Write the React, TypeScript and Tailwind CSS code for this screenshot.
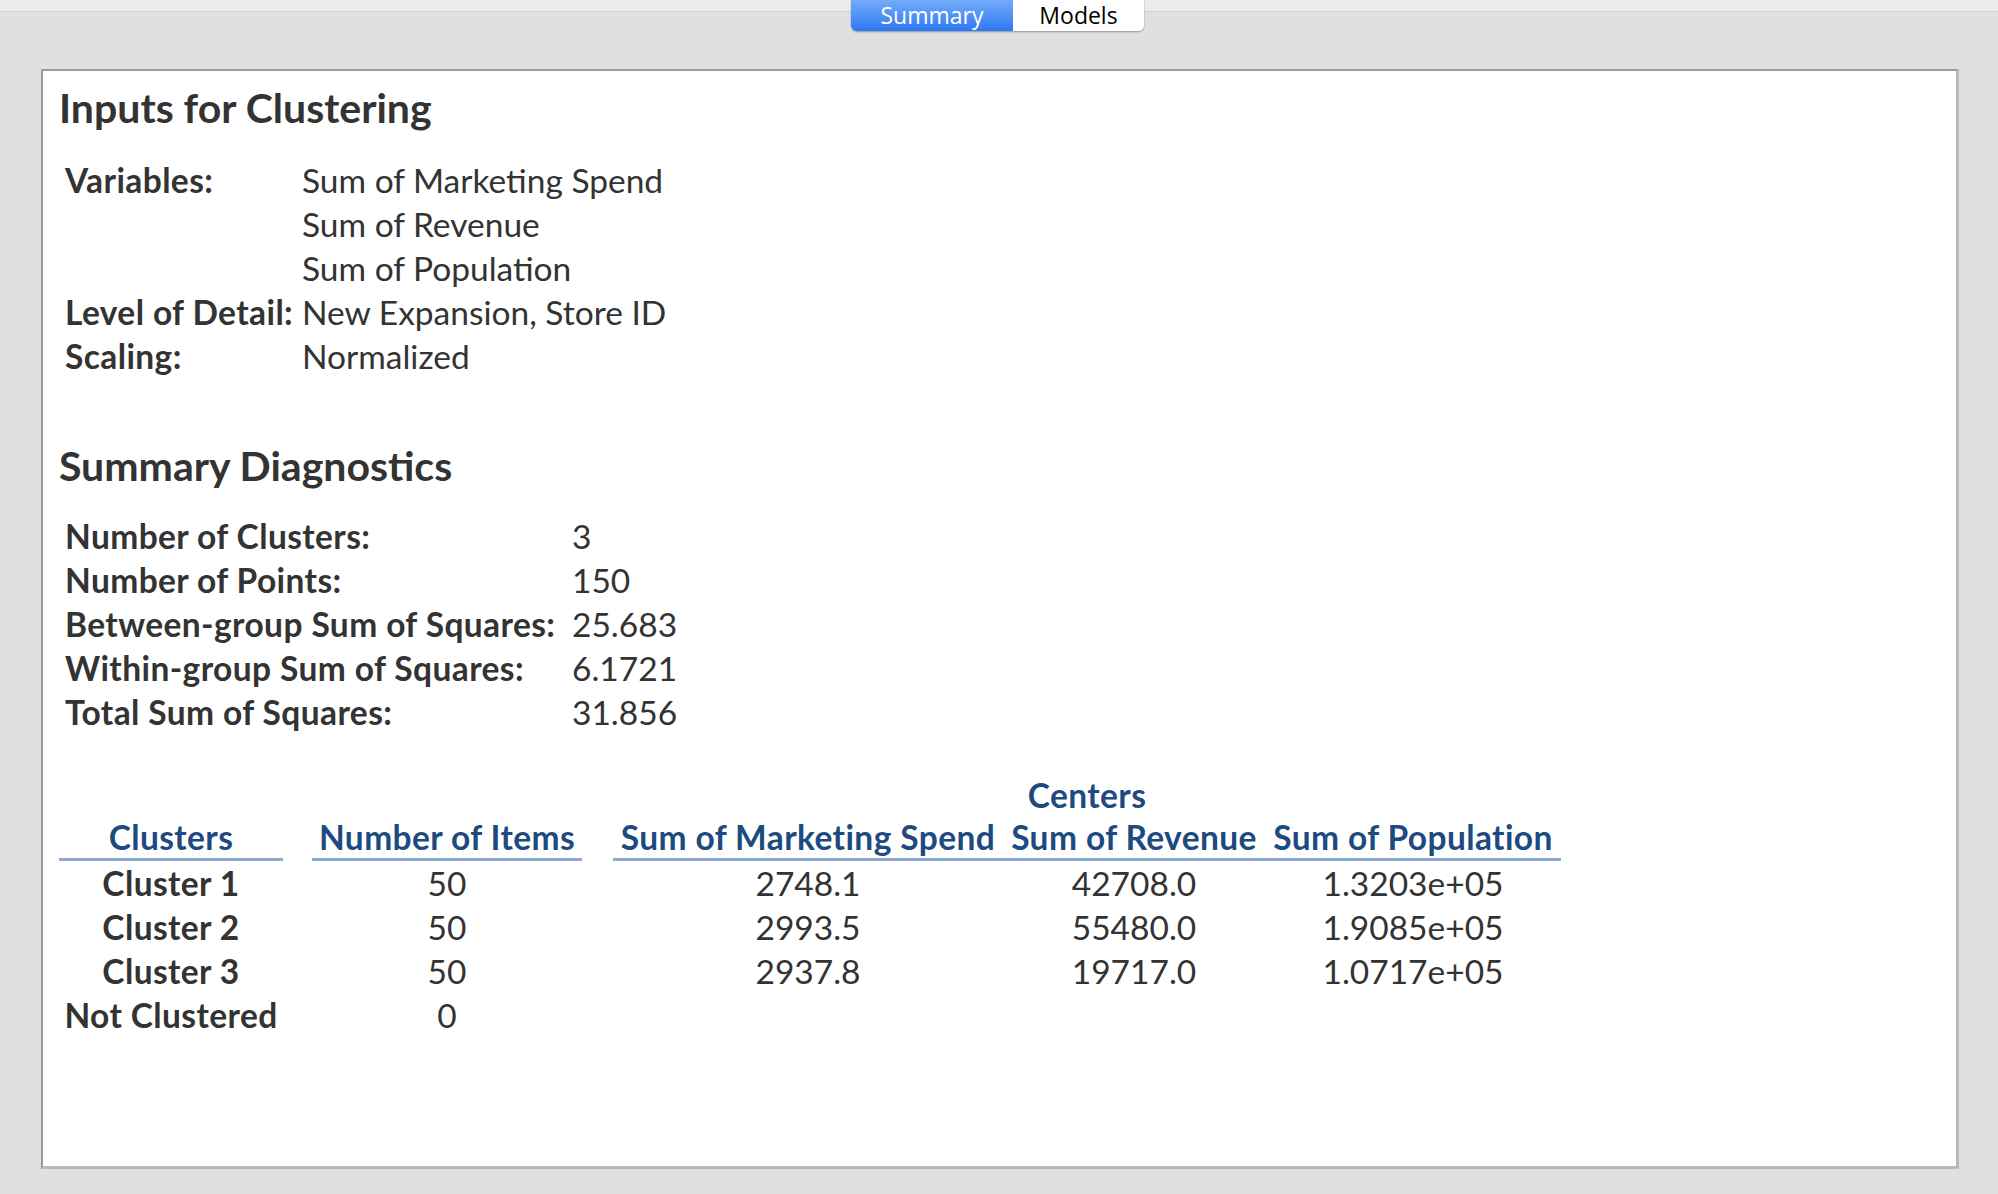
import React from 'react';

const inputs = [
  { label: 'Variables:', value: 'Sum of Marketing Spend' },
  { label: '', value: 'Sum of Revenue' },
  { label: '', value: 'Sum of Population' },
  { label: 'Level of Detail:', value: 'New Expansion, Store ID' },
  { label: 'Scaling:', value: 'Normalized' },
];

const diagnostics = [
  { label: 'Number of Clusters:', value: '3' },
  { label: 'Number of Points:', value: '150' },
  { label: 'Between-group Sum of Squares:', value: '25.683' },
  { label: 'Within-group Sum of Squares:', value: '6.1721' },
  { label: 'Total Sum of Squares:', value: '31.856' },
];

const clusters = [
  { name: 'Cluster 1', items: '50', spend: '2748.1', revenue: '42708.0', pop: '1.3203e+05' },
  { name: 'Cluster 2', items: '50', spend: '2993.5', revenue: '55480.0', pop: '1.9085e+05' },
  { name: 'Cluster 3', items: '50', spend: '2937.8', revenue: '19717.0', pop: '1.0717e+05' },
  { name: 'Not Clustered', items: '0', spend: '', revenue: '', pop: '' },
];

export default function App() {
  return (
    <div className="w-[1998px] h-[1194px] bg-[#e0e0e0] flex flex-col font-['Lato',_'Liberation_Sans',_sans-serif] text-[#333333] overflow-hidden">
      {/* top strip + tabs */}
      <div className="relative h-[69px] shrink-0">
        <div className="h-[12px] bg-[#ececec] border-b border-[#d2d2d2]" />
        <div className="absolute left-[851px] top-0 flex h-[31px] rounded-b-[6px] shadow-[0_1px_2px_rgba(0,0,0,0.35)] overflow-hidden font-['Open_Sans',_sans-serif]">
          <div className="w-[162px] flex items-center justify-center bg-gradient-to-b from-[#74abf9] to-[#2c77f3] text-white text-[23px] leading-[29px]">
            Summary
          </div>
          <div className="w-[131px] flex items-center justify-center bg-white text-black text-[23px] leading-[29px]">
            Models
          </div>
        </div>
      </div>

      {/* panel */}
      <div className="ml-[41px] w-[1918px] h-[1100px] bg-white border-t-2 border-l-2 border-[#9c9c9c] border-r-[3px] border-b-[3px] border-r-[#b9b9b9] border-b-[#b9b9b9] pl-[16px] pt-[15px]">
        <h2 className="text-[41px] leading-[44px] font-bold">Inputs for Clustering</h2>

        <div className="mt-[28px] ml-[6px]">
          {inputs.map((r, i) => (
            <div key={i} className="flex text-[33.5px] leading-[44px]">
              <div className="w-[237px] font-bold tracking-[0.4px]">{r.label}</div>
              <div>{r.value}</div>
            </div>
          ))}
        </div>

        <h2 className="mt-[66px] text-[41px] leading-[44px] font-bold">Summary Diagnostics</h2>

        <div className="mt-[26px] ml-[6px]">
          {diagnostics.map((r, i) => (
            <div key={i} className="flex text-[33.5px] leading-[44px]">
              <div className="w-[507px] font-bold tracking-[0.4px] whitespace-nowrap">{r.label}</div>
              <div>{r.value}</div>
            </div>
          ))}
        </div>

        {/* clusters table */}
        <div className="mt-[40px] text-[33.5px]">
          <div className="flex leading-[42px] font-bold tracking-[0.4px] text-[#1d4a80]">
            <div className="w-[554px]" />
            <div className="w-[948px] text-center">Centers</div>
          </div>
          <div className="flex leading-[42px] font-bold tracking-[0.4px] text-[#1d4a80]">
            <div className="w-[224px] text-center border-b-[3px] border-[#8eaad2]">Clusters</div>
            <div className="ml-[29px] w-[270px] text-center border-b-[3px] border-[#8eaad2] whitespace-nowrap">Number of Items</div>
            <div className="ml-[31px] flex border-b-[3px] border-[#8eaad2]">
              <div className="w-[390px] text-center whitespace-nowrap">Sum of Marketing Spend</div>
              <div className="w-[262px] text-center whitespace-nowrap">Sum of Revenue</div>
              <div className="w-[296px] text-center whitespace-nowrap">Sum of Population</div>
            </div>
          </div>
          {clusters.map((c) => (
            <div key={c.name} className="flex leading-[44px]">
              <div className="w-[224px] text-center font-bold tracking-[0.4px] whitespace-nowrap">{c.name}</div>
              <div className="ml-[29px] w-[270px] text-center">{c.items}</div>
              <div className="ml-[31px] w-[390px] text-center">{c.spend}</div>
              <div className="w-[262px] text-center">{c.revenue}</div>
              <div className="w-[296px] text-center">{c.pop}</div>
            </div>
          ))}
        </div>
      </div>
    </div>
  );
}
